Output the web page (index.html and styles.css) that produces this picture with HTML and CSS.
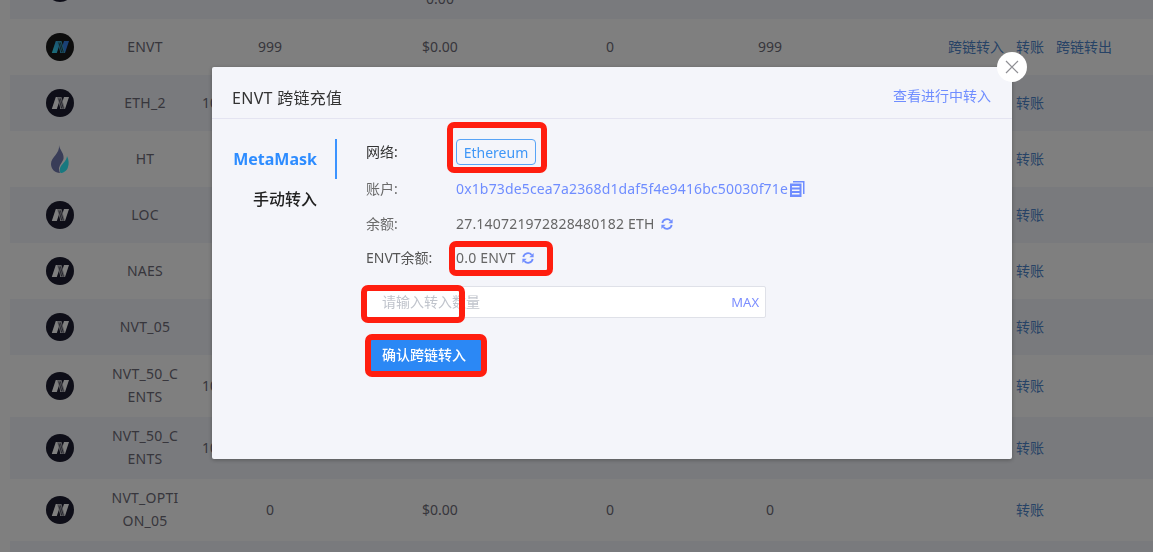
FILE: index.html
```html
<!DOCTYPE html>
<html lang="zh">
<head>
<meta charset="utf-8">
<title>ENVT 跨链充值</title>
<link rel="stylesheet" href="styles.css">
</head>
<body>
<svg class="defs" width="0" height="0" aria-hidden="true">
  <defs>
    <linearGradient id="nLeft" x1="0" y1="1" x2="1" y2="0"><stop offset="0" stop-color="#38e0ee"/><stop offset="1" stop-color="#34a0f0"/></linearGradient>
    <symbol id="n-gray" viewBox="0 0 28 28">
      <circle cx="14" cy="14" r="14" fill="#1d1d30"/>
      <path d="M5.800 20 9.800 8h5l-4 12z" fill="#fff"/>
      <path d="M14 20l4-12h5l-4 12z" fill="#fff"/>
      <path d="M11 8h4.500l3.500 12h-4.500z" fill="#bcbcc2"/>
      <path d="M12.800 9.500l3 10M14.400 9.500l3 10" stroke="#1d1d30" stroke-width=".7" fill="none"/>
    </symbol>
    <symbol id="n-color" viewBox="0 0 28 28">
      <circle cx="14" cy="14" r="14" fill="#1a1a1a"/>
      <path d="M5.800 20 9.800 8h5l-4 12z" fill="url(#nLeft)"/>
      <path d="M14 20l4-12h5l-4 12z" fill="#3480e8"/>
      <path d="M11 8h4.500l3.500 12h-4.500z" fill="#3aa8c8"/>
      <path d="M12.800 9.500l3 10M14.400 9.500l3 10" stroke="#1a1a1a" stroke-width=".7" fill="none"/>
    </symbol>
    <symbol id="refresh" viewBox="0 0 12 12">
      <path d="M1.300 5A4.800 4.800 0 0 1 9.600 2.800" fill="none" stroke="currentColor" stroke-width="1.800"/>
      <path d="M11.600 1v4.200H7.400z" fill="currentColor"/>
      <path d="M10.700 7A4.800 4.800 0 0 1 2.400 9.200" fill="none" stroke="currentColor" stroke-width="1.800"/>
      <path d="M.4 11V6.800h4.200z" fill="currentColor"/>
    </symbol>
  </defs>
</svg>

<main class="table">
  <div class="row row-tall">
    <div class="cell"><svg class="coin"><use href="#n-gray"/></svg></div>
    <div class="cell"></div><div class="cell"></div>
    <div class="cell">$0<br>0.00</div>
    <div class="cell"></div><div class="cell"></div><div class="cell"></div>
  </div>
  <div class="row">
    <div class="cell"><svg class="coin"><use href="#n-color"/></svg></div>
    <div class="cell cell-name">ENVT</div><div class="cell">999</div><div class="cell">$0.00</div><div class="cell">0</div><div class="cell">999</div>
    <div class="actions"><a class="link">跨链转入</a><a class="link link-mid">转账</a><a class="link">跨链转出</a></div>
  </div>
  <div class="row">
    <div class="cell"><svg class="coin"><use href="#n-gray"/></svg></div>
    <div class="cell cell-name">ETH_2</div><div class="cell cell-nowrap">10000000000000000</div><div class="cell"></div><div class="cell"></div><div class="cell"></div>
    <div class="actions"><a class="link link-mid">转账</a></div>
  </div>
  <div class="row">
    <div class="cell">
      <svg class="flame" viewBox="0 0 18 28"><path d="M8 0C8.500 5 13.500 8 12.500 14 11.500 17 9 19 8 23 8 25 8.500 27 9 28 4 28 0 24 0 19 0 12 9 9 8 0Z" fill="#727ab0"/><path d="M16 11C18 15 18 19 17 22 16 26 12 28 9.500 28 8.500 26 8.500 23 10 21 12 18 15.500 16 16 11Z" fill="#30f0ff"/></svg>
    </div>
    <div class="cell cell-name">HT</div><div class="cell"></div><div class="cell"></div><div class="cell"></div><div class="cell"></div>
    <div class="actions"><a class="link link-mid">转账</a></div>
  </div>
  <div class="row">
    <div class="cell"><svg class="coin"><use href="#n-gray"/></svg></div>
    <div class="cell cell-name">LOC</div><div class="cell"></div><div class="cell"></div><div class="cell"></div><div class="cell"></div>
    <div class="actions"><a class="link link-mid">转账</a></div>
  </div>
  <div class="row">
    <div class="cell"><svg class="coin"><use href="#n-gray"/></svg></div>
    <div class="cell cell-name">NAES</div><div class="cell"></div><div class="cell"></div><div class="cell"></div><div class="cell"></div>
    <div class="actions"><a class="link link-mid">转账</a></div>
  </div>
  <div class="row">
    <div class="cell"><svg class="coin"><use href="#n-gray"/></svg></div>
    <div class="cell cell-name">NVT_05</div><div class="cell"></div><div class="cell"></div><div class="cell"></div><div class="cell"></div>
    <div class="actions"><a class="link link-mid">转账</a></div>
  </div>
  <div class="row row-tall">
    <div class="cell"><svg class="coin"><use href="#n-gray"/></svg></div>
    <div class="cell cell-name">NVT_50_CENTS</div><div class="cell cell-nowrap">10000000000000000</div><div class="cell"></div><div class="cell"></div><div class="cell"></div>
    <div class="actions"><a class="link link-mid">转账</a></div>
  </div>
  <div class="row row-tall">
    <div class="cell"><svg class="coin"><use href="#n-gray"/></svg></div>
    <div class="cell cell-name">NVT_50_CENTS</div><div class="cell cell-nowrap">10000000000000000</div><div class="cell"></div><div class="cell"></div><div class="cell"></div>
    <div class="actions"><a class="link link-mid">转账</a></div>
  </div>
  <div class="row row-tall">
    <div class="cell"><svg class="coin"><use href="#n-gray"/></svg></div>
    <div class="cell cell-name">NVT_OPTION_05</div><div class="cell">0</div><div class="cell">$0.00</div><div class="cell">0</div><div class="cell">0</div>
    <div class="actions"><a class="link link-mid">转账</a></div>
  </div>
  <div class="row row-end"></div>
</main>

<div class="overlay"></div>

<section class="modal">
  <button class="close" aria-label="关闭">
    <svg viewBox="0 0 14 14" width="14" height="14"><path d="M1 1l12 12M13 1 1 13" stroke="#8f8f94" stroke-width="1.200" fill="none"/></svg>
  </button>
  <header class="modal-head">
    <h2 class="modal-title">ENVT 跨链充值</h2>
    <a class="modal-link">查看进行中转入</a>
  </header>
  <div class="modal-body">
    <nav class="tabs">
      <div class="tab tab-active">MetaMask</div>
      <div class="tab">手动转入</div>
    </nav>
    <div class="form">
      <div class="field field-network">
        <span class="label label-dark">网络:</span>
        <span class="tag">Ethereum</span>
      </div>
      <div class="field field-account">
        <span class="label">账户:</span>
        <span class="address">0x1b73de5cea7a2368d1daf5f4e9416bc50030f71e</span>
        <svg class="copy" viewBox="0 0 16 16"><path d="M4 1.500V0h11.500v13H14V1.500z" fill="#6f8dff"/><path d="M1 2.500h11.500V16H1z" fill="#6f8dff"/><path d="M3 5h7.500v1.500H3zM3 8.500h7.500V10H3zM3 12h7.500v1.500H3z" fill="#f4f5fa"/></svg>
      </div>
      <div class="field">
        <span class="label">余额:</span>
        <span class="value">27.140721972828480182 ETH</span>
        <svg class="refresh"><use href="#refresh"/></svg>
      </div>
      <div class="field">
        <span class="label label-mid">ENVT余额:</span>
        <span class="value">0.0 ENVT</span>
        <svg class="refresh"><use href="#refresh"/></svg>
      </div>
      <div class="input-box">
        <span class="placeholder">请输入转入数量</span>
        <span class="max">MAX</span>
      </div>
      <button class="submit">确认跨链转入</button>
    </div>
  </div>
  <i class="mark mark-network"></i>
  <i class="mark mark-balance"></i>
  <i class="mark mark-input"></i>
  <i class="mark mark-submit"></i>
</section>
</body>
</html>
```

FILE: styles.css
```css
* { box-sizing: border-box; }
html, body { height: 100%; }
body {
  margin: 0;
  overflow: hidden;
  background: #fff;
  font-family: "Noto Sans", "Noto Sans CJK SC", sans-serif;
  font-size: 14px;
  color: #333;
}
.defs { position: absolute; }

.table { margin-top: -43px; padding-left: 10px; }
.row {
  display: grid;
  grid-template-columns: 100px 70px 180px 160px 180px 140px 1fr;
  align-items: center;
  height: 56px;
  line-height: 23px;
  text-align: center;
  color: #6e6c78;
}
.row:nth-child(odd) { background: #f3f5fb; }
.row-tall { height: 62px; }
.row-end { height: 11px; }
.cell {
  display: flex;
  justify-content: center;
  word-break: break-all;
  min-width: 0;
}
.cell:not(:first-child) { display: block; padding-bottom: 2px; }
.cell-name { letter-spacing: .25px; }
.cell-nowrap { white-space: nowrap; }
.coin { width: 28px; height: 28px; display: block; }
.flame { width: 18px; height: 28px; display: block; }
.actions {
  display: grid;
  grid-template-columns: 56px 28px 56px;
  column-gap: 12px;
  padding: 0 0 2px 108px;
}
.link { color: #4f86cc; white-space: nowrap; }
.link-mid { grid-column: 2; }

.overlay {
  position: fixed;
  inset: 0;
  background: rgba(0, 0, 0, .5);
}

.modal {
  position: fixed;
  left: 212px;
  top: 67px;
  width: 800px;
  height: 392px;
  background: #f4f5fa;
  border-radius: 2px;
  box-shadow: 0 1px 4px rgba(0, 0, 0, .3);
}
.close {
  position: absolute;
  right: -15px;
  top: -15px;
  width: 30px;
  height: 30px;
  padding: 0;
  border: 0;
  border-radius: 50%;
  background: #fff;
  display: flex;
  align-items: center;
  justify-content: center;
}
.modal-head {
  display: flex;
  align-items: center;
  justify-content: space-between;
  height: 52px;
  padding: 4px 21px 0 20px;
  border-bottom: 1px solid #e4e4f1;
}
.modal-title {
  margin: 4px 0 0;
  font-size: 16px;
  font-weight: 400;
  letter-spacing: .3px;
  color: #333;
}
.modal-link { color: #6f8dff; }

.modal-body { display: flex; padding-top: 20px; }
.tabs { width: 125px; flex: none; }
.tab {
  height: 40px;
  line-height: 40px;
  padding-right: 20px;
  text-align: right;
  font-size: 16px;
  font-weight: 500;
  color: #222;
}
.tab-active {
  padding-right: 18px;
  border-right: 2px solid #3b93ff;
  font-weight: 700;
  color: #2d8cff;
}

.form { margin-left: 29px; display: flex; flex-direction: column; align-items: flex-start; }
.field { display: flex; align-items: center; height: 24px; line-height: 24px; margin-bottom: 10px; }
.field-network { height: 26px; margin-bottom: 12px; }
.field-account { margin-bottom: 11px; }
.label { width: 90px; flex: none; color: #6a6a6a; }
.label-dark { color: #333; }
.label-mid { color: #555; }
.tag {
  height: 26px;
  width: 80px;
  line-height: 25px;
  text-align: center;
  border: 1px solid #58a4f6;
  border-radius: 4px;
  color: #3f97f7;
}
.address { color: #6f8dff; letter-spacing: .15px; }
.copy { width: 16px; height: 16px; margin-left: 1px; }
.value { color: #666; letter-spacing: .2px; }
.refresh { width: 12px; height: 12px; margin-left: 6px; color: #6f8dff; }
.input-box {
  width: 400px;
  height: 32px;
  margin-top: 6px;
  padding: 0 6px 0 15px;
  display: flex;
  align-items: center;
  justify-content: space-between;
  background: #fff;
  border: 1px solid #dfe1e8;
  border-radius: 2px;
}
.placeholder { color: #c0c4cc; padding-bottom: 2px; }
.max { font-size: 13px; color: #7c8eff; }
.submit {
  margin-top: 19px;
  width: 116px;
  height: 36px;
  padding: 0 0 2px;
  border: 0;
  border-radius: 2px;
  background: #2b88f5;
  color: #fff;
  font: 500 14px "Noto Sans", "Noto Sans CJK SC", sans-serif;
}

.mark {
  position: absolute;
  border: 6px solid #ff1e0f;
  border-radius: 7px;
}
.mark-network { left: 235px; top: 55px; width: 100px; height: 51px; }
.mark-balance { left: 237px; top: 174px; width: 104px; height: 35px; }
.mark-input { left: 149px; top: 218px; width: 104px; height: 38px; }
.mark-submit { left: 153px; top: 267px; width: 122px; height: 43px; }
```
